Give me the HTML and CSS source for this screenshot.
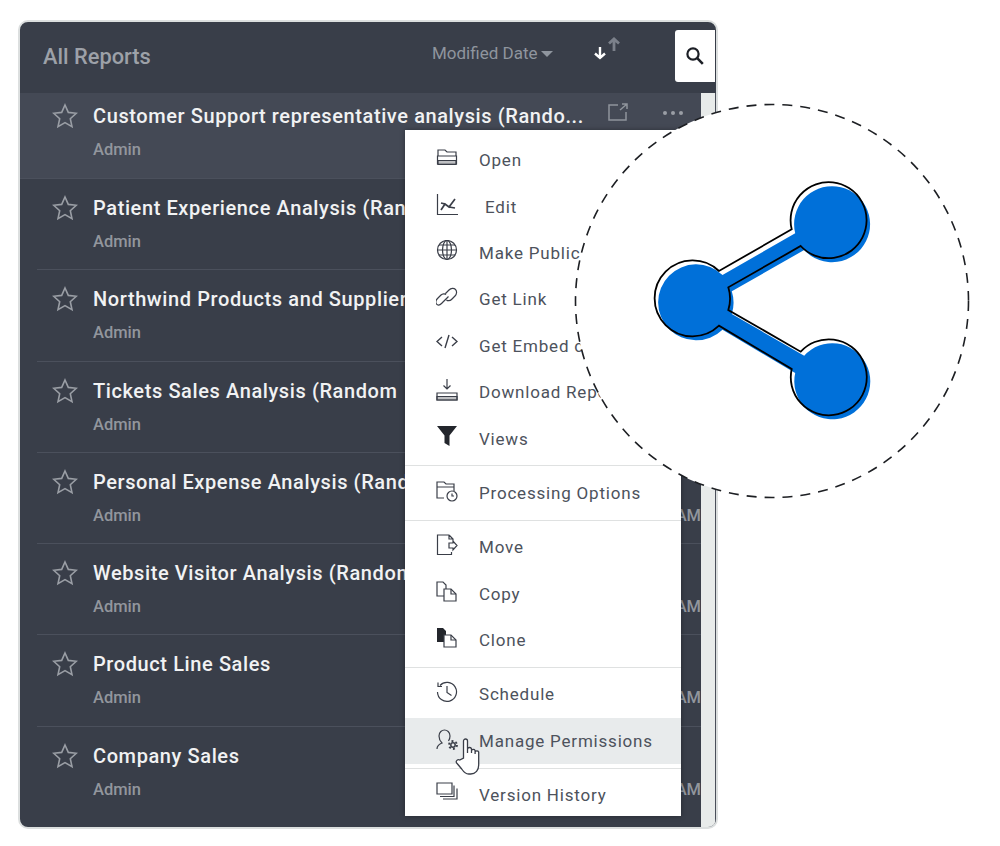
FILE: index.html
```html
<!DOCTYPE html>
<html lang="en">
<head>
    <meta charset="UTF-8">
    <meta name="viewport" content="width=device-width, initial-scale=1.0">
    <title>All Reports</title>
    <link rel="stylesheet" href="styles.css">
</head>
<body>
    <div class="panel">
        <div class="panel__head">
            <div class="panel__title">All Reports</div>
            <div class="sort">Modified Date<span class="sort__caret"></span></div>
            <div class="order">
                <svg class="order__down" width="14" height="16" viewBox="0 0 14 16"><path d="M7 2v11M2 8.500 7 13l5-4.500" fill="none" stroke="#fff" stroke-width="2.400"/></svg>
                <svg class="order__up" width="14" height="16" viewBox="0 0 14 16"><path d="M7 15V3M2 7.500 7 3l5 4.500" fill="none" stroke="#7b808a" stroke-width="2.800"/></svg>
            </div>
            <div class="search">
                <svg width="20" height="20" viewBox="0 0 20 20"><circle cx="8" cy="8" r="5.600" fill="none" stroke="#1c1f26" stroke-width="2.200"/><path d="m12.200 12.200 5.600 5.600" stroke="#1c1f26" stroke-width="2.600"/></svg>
            </div>
        </div>
        <div class="panel__body">
            <div class="list">
                <div class="row row--hover">
                    <svg class="star" viewBox="0 0 26 26"><path d="M13 2l3.300 7.400 8 .9-6 5.400 1.700 7.900-7-4-7 4 1.700-7.900-6-5.400 8-.9z"/></svg>
                    <div class="row__main">
                        <div class="row__name">Customer Support representative analysis (Rando...</div>
                        <div class="row__meta"><span>Admin</span></div>
                    </div>
                    <svg class="row__open" width="22" height="18" viewBox="0 0 22 18"><path d="M11 2H2v15h17V9M13 7l7-6M15 1h5v5" fill="none" stroke="#8f949c" stroke-width="1.500"/></svg>
                    <div class="row__dots"><i></i><i></i><i></i></div>
                </div>
                <div class="row">
                    <svg class="star" viewBox="0 0 26 26"><path d="M13 2l3.300 7.400 8 .9-6 5.400 1.700 7.900-7-4-7 4 1.700-7.900-6-5.400 8-.9z"/></svg>
                    <div class="row__main">
                        <div class="row__name">Patient Experience Analysis (Ran</div>
                        <div class="row__meta"><span>Admin</span></div>
                    </div>
                </div>
                <div class="row">
                    <svg class="star" viewBox="0 0 26 26"><path d="M13 2l3.300 7.400 8 .9-6 5.400 1.700 7.900-7-4-7 4 1.700-7.900-6-5.400 8-.9z"/></svg>
                    <div class="row__main">
                        <div class="row__name">Northwind Products and Supplier</div>
                        <div class="row__meta"><span>Admin</span></div>
                    </div>
                </div>
                <div class="row">
                    <svg class="star" viewBox="0 0 26 26"><path d="M13 2l3.300 7.400 8 .9-6 5.400 1.700 7.900-7-4-7 4 1.700-7.900-6-5.400 8-.9z"/></svg>
                    <div class="row__main">
                        <div class="row__name">Tickets Sales Analysis (Random</div>
                        <div class="row__meta"><span>Admin</span></div>
                    </div>
                </div>
                <div class="row">
                    <svg class="star" viewBox="0 0 26 26"><path d="M13 2l3.300 7.400 8 .9-6 5.400 1.700 7.900-7-4-7 4 1.700-7.900-6-5.400 8-.9z"/></svg>
                    <div class="row__main">
                        <div class="row__name">Personal Expense Analysis (Rand</div>
                        <div class="row__meta"><span>Admin</span><span>AM</span></div>
                    </div>
                </div>
                <div class="row">
                    <svg class="star" viewBox="0 0 26 26"><path d="M13 2l3.300 7.400 8 .9-6 5.400 1.700 7.900-7-4-7 4 1.700-7.900-6-5.400 8-.9z"/></svg>
                    <div class="row__main">
                        <div class="row__name">Website Visitor Analysis (Random</div>
                        <div class="row__meta"><span>Admin</span><span>AM</span></div>
                    </div>
                </div>
                <div class="row">
                    <svg class="star" viewBox="0 0 26 26"><path d="M13 2l3.300 7.400 8 .9-6 5.400 1.700 7.900-7-4-7 4 1.700-7.900-6-5.400 8-.9z"/></svg>
                    <div class="row__main">
                        <div class="row__name">Product Line Sales</div>
                        <div class="row__meta"><span>Admin</span><span>AM</span></div>
                    </div>
                </div>
                <div class="row">
                    <svg class="star" viewBox="0 0 26 26"><path d="M13 2l3.300 7.400 8 .9-6 5.400 1.700 7.900-7-4-7 4 1.700-7.900-6-5.400 8-.9z"/></svg>
                    <div class="row__main">
                        <div class="row__name">Company Sales</div>
                        <div class="row__meta"><span>Admin</span><span>AM</span></div>
                    </div>
                </div>
            </div>
            <div class="scroll"></div>
        </div>
    </div>

    <div class="menu">
        <div class="menu__group">
            <div class="item">
                <svg class="item__icon" viewBox="0 0 22 22"><path d="M2 9V3h7l2 2h9v4M1.500 9h19v8h-19z" /><path class="solid solid--grey" d="M2 13.500h18v4H2z"/></svg>
                <span>Open</span>
            </div>
            <div class="item item--edit">
                <svg class="item__icon" viewBox="0 0 22 22"><path d="M1.500 0v20.500h21"/><path class="thick" d="M5 16l4-6 4 3 6-8M5 9l4 1 4 3 6 1"/></svg>
                <span>Edit</span>
            </div>
            <div class="item">
                <svg class="item__icon" viewBox="0 0 22 22"><circle cx="11" cy="10" r="9.500"/><ellipse cx="11" cy="10" rx="4.500" ry="9.500"/><path d="M11 .5v19M1.500 10h19M3 5h16M3 15h16"/></svg>
                <span>Make Public</span>
            </div>
            <div class="item">
                <svg class="item__icon" viewBox="0 0 22 22"><path d="M9.500 7.500 13 4c2-2 5-2 6.500-.5S21 8 19 10l-3.500 3.500c-1.500 1.500-4 1.500-5 .5M12.500 10.500 9 14l-3.500 3.500c-2 2-4 2-5 .5s-.5-4 1-5.500L5 9c1.500-1.500 4-1.500 5-.5"/></svg>
                <span>Get Link</span>
            </div>
            <div class="item">
                <svg class="item__icon" viewBox="0 0 22 22"><path d="M6 4 1 8.500 6 13M16 4l5 4.500L16 13M13 2 9 15" stroke-width="1.400"/></svg>
                <span>Get Embed code</span>
            </div>
            <div class="item">
                <svg class="item__icon" viewBox="0 0 22 22"><path d="M11 0v10M7.500 6.500 11 10l3.500-3.500M1 14h20v7H1z"/><path class="solid solid--grey" d="M1 17.500h20V21H1z"/></svg>
                <span>Download Report</span>
            </div>
            <div class="item">
                <svg class="item__icon" viewBox="0 0 22 22"><path class="solid" d="M1 0h20l-7.500 9.500V20L8.500 17V9.500z"/></svg>
                <span>Views</span>
            </div>
        </div>
        <div class="menu__group">
            <div class="item">
                <svg class="item__icon" viewBox="0 0 22 22"><path d="M8 18H1V2h7l2 2h8v7M1 7h17"/><circle cx="16" cy="16" r="5"/><path d="M16 13.500V16h2"/></svg>
                <span>Processing Options</span>
            </div>
        </div>
        <div class="menu__group">
            <div class="item">
                <svg class="item__icon" viewBox="0 0 22 22"><path d="M13 1H1.500v19.500h14V18M13 1l4 4v2M13 1v4h4M13 9h4v-2l4 4.500-4 4.500v-2h-4z"/></svg>
                <span>Move</span>
            </div>
            <div class="item">
                <svg class="item__icon" viewBox="0 0 22 22"><path d="M8 15H1V1h6l3 3v4"/><path d="M8 8h7l5 5v7H8z"/><path d="M15 8v5h5"/></svg>
                <span>Copy</span>
            </div>
            <div class="item">
                <svg class="item__icon" viewBox="0 0 22 22"><path class="solid" d="M1 1h6l3 3v4H8v7H1z"/><path d="M8 8h7l5 5v7H8z"/><path d="M15 8v5h5"/></svg>
                <span>Clone</span>
            </div>
        </div>
        <div class="menu__group">
            <div class="item">
                <svg class="item__icon" viewBox="0 0 22 22"><path d="M4 4.500A9.500 9.500 0 1 1 1.500 11M2 1.500v4h4M11 5v6.500l4.500 3"/></svg>
                <span>Schedule</span>
            </div>
            <div class="item item--active">
                <svg class="item__icon" viewBox="0 0 22 22"><path d="M1 21c0-4 3-5 5-6-2-2-3-4-3-7 0-4 3-6 5.500-6S14 4 14 8c0 2-.5 3.500-1.500 5"/><circle cx="17" cy="17" r="2.200" stroke-width="1.500"/><circle cx="17" cy="17" r="4" stroke-width="1.800" stroke-dasharray="2 2.200"/></svg>
                <span>Manage Permissions</span>
            </div>
        </div>
        <div class="menu__group">
            <div class="item">
                <svg class="item__icon" viewBox="0 0 22 22"><path d="M1 1h15v11H1z"/><path d="M18 3.500V14.500H4M21 6.500V17H7"/></svg>
                <span>Version History</span>
            </div>
        </div>
    </div>

    <svg class="hand" viewBox="0 0 28 38"><path d="M8.500 20V3a2 2 0 0 1 4 0v12-3.500a2 2 0 0 1 4 0V15v-2.500a2 2 0 0 1 3.600 0V16v-2a2 2 0 0 1 3.600 0v13c0 5-3 9-8 9h-2c-3 0-5-2-7-5l-5-6c-1.500-2 1-4 3-3z"/></svg>

    <svg class="bubble" viewBox="570 100 404 404">
        <circle cx="772" cy="301" r="196.500" fill="#fff" stroke="#1d1f23" stroke-width="1.600" stroke-dasharray="10 8"/>
        <path transform="translate(3.500 4)" fill="#0070d9" d="M791.700 229.300 719 271A38 38 0 1 0 719 325.700L791.700 369A38 38 0 1 0 800.700 351.700L728.300 310A38 38 0 0 0 728.300 287.300L800.700 246A38 38 0 1 0 791.700 229.300z"/>
        <path fill="none" stroke="#000" stroke-width="1.800" d="M791.700 229.300 719 271A38 38 0 1 0 719 325.700L791.700 369A38 38 0 1 0 800.700 351.700L728.300 310A38 38 0 0 0 728.300 287.300L800.700 246A38 38 0 1 0 791.700 229.300z"/>
    </svg>
</body>
</html>
```

FILE: styles.css
```css
*{
    margin: 0;
    padding: 0;
    box-sizing: border-box;
}
body {
    padding: 20px 0 0 18px;
    background: #fff;
    font-family: Roboto, "Liberation Sans", sans-serif;
    overflow: hidden;
}

.panel {
    width: 700px;
    height: 809px;
    display: flex;
    flex-direction: column;
    background: #393e49;
    border: 2px solid #dcdfdf;
    border-radius: 10px;
    overflow: hidden;
}

.panel__head {
    height: 71px;
    flex: none;
    display: flex;
    align-items: flex-start;
}
.panel__title {
    margin: 22px 0 0 23px;
    width: 389px;
    font-size: 21.8px;
    font-weight: 500;
    color: #9da1a8;
}
.sort {
    margin-top: 21px;
    width: 161px;
    font-size: 17px;
    color: #8f959e;
    display: flex;
    align-items: center;
}
.sort__caret {
    margin: 2px 0 0 4px;
    border-left: 6px solid transparent;
    border-right: 6px solid transparent;
    border-top: 6px solid #8f959e;
}
.order {
    width: 82px;
    margin-top: 14px;
    display: flex;
}
.order__down {
    margin-top: 9px;
}
.search {
    width: 40px;
    height: 52px;
    margin-top: 8px;
    background: #fff;
    border-radius: 3px 0 0 3px;
    display: flex;
    align-items: center;
    justify-content: center;
}

.panel__body {
    flex: 1;
    display: flex;
    min-height: 0;
}
.list {
    width: 681px;
    flex: none;
}
.scroll {
    width: 15px;
    background: #e8ebea;
    border-right: 1px solid #4a4f5a;
}

.row {
    height: 91.3px;
    margin-left: 17px;
    padding: 15px 0 0 15px;
    display: flex;
    align-items: flex-start;
    border-bottom: 1px solid #4b505c;
}
.row:last-child {
    border-bottom: 0;
}
.row--hover {
    height: 86px;
    margin-left: 0;
    padding: 9px 0 0 32px;
    background: #444955;
}
.star {
    width: 26px;
    height: 26px;
    flex: none;
    margin-top: 1px;
    fill: none;
    stroke: #9a9ea5;
    stroke-width: 1.6;
}
.row__main {
    margin-left: 15px;
    flex: 1;
    min-width: 0;
}
.row__name {
    font-size: 20px;
    font-weight: 500;
    letter-spacing: .6px;
    line-height: 28px;
    color: #f1f2f3;
    white-space: nowrap;
}
.row__meta {
    margin-top: 10px;
    font-size: 16.5px;
    line-height: 20px;
    font-weight: 500;
    color: #92969d;
    display: flex;
    justify-content: space-between;
}
.row__open {
    position: absolute;
    left: 607px;
    top: 103px;
}
.row__dots {
    position: absolute;
    left: 663px;
    top: 111px;
    display: flex;
    gap: 4px;
}
.row__dots i {
    width: 4px;
    height: 4px;
    border-radius: 50%;
    background: #9a9ea5;
}

.menu {
    position: absolute;
    left: 405px;
    top: 130px;
    width: 276px;
    height: 686px;
    padding-top: 7px;
    background: #fff;
    box-shadow: 0 0 5px rgba(0,0,0,.35);
    overflow: hidden;
}
.menu__group {
    padding-bottom: 3.5px;
    margin-bottom: 3.5px;
    border-bottom: 1px solid #dfe1e1;
}
.menu__group:last-child {
    border-bottom: 0;
}
.item {
    height: 46.4px;
    padding-left: 31px;
    display: flex;
    align-items: center;
    font-size: 17px;
    letter-spacing: .8px;
    color: #4d525c;
    white-space: nowrap;
}
.item span {
    margin-left: 21px;
}
.item--edit span {
    margin-left: 27px;
}
.item--active {
    background: #e8ebec;
}
.item__icon {
    width: 22px;
    height: 22px;
    flex: none;
    margin-top: -4px;
    fill: none;
    stroke: #3a3e48;
    stroke-width: 1.2;
}
.item__icon .solid {
    fill: #23262c;
    stroke: none;
}
.item__icon .solid--grey {
    fill: #8a8d92;
    fill-opacity: .55;
    stroke: #3a3e48;
    stroke-width: 1.2;
}
.item__icon .thick {
    stroke-width: 1.7;
}

.hand {
    position: absolute;
    left: 455px;
    top: 738px;
    width: 28px;
    height: 38px;
    fill: #fff;
    stroke: #3a3e48;
    stroke-width: 1.3;
}

.bubble {
    position: absolute;
    left: 570px;
    top: 100px;
    width: 404px;
    height: 404px;
}
```
